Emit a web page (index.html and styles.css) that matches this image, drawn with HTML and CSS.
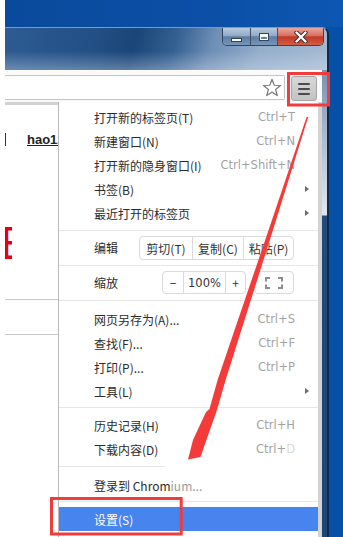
FILE: index.html
```html
<!DOCTYPE html>
<html>
<head>
<meta charset="utf-8">
<link rel="stylesheet" href="styles.css">
</head>
<body>
<div class="screen">
  <div class="strip"></div>
  <div class="main">
    <div class="desk-top"></div>
    <div class="row">
      <div class="window">
        <div class="titlebar">
          <div class="caps">
            <div class="cap min"><span class="min-ico"></span></div>
            <div class="cap max"><span class="max-ico"></span></div>
            <div class="cap close">
              <svg width="14" height="12" viewBox="0 0 14 12"><path d="M2.5 1.5 L11.5 10.5 M11.5 1.5 L2.5 10.5" stroke="#3a2a28" stroke-width="4.2" stroke-linecap="round"/><path d="M2.5 1.5 L11.5 10.5 M11.5 1.5 L2.5 10.5" stroke="#ffffff" stroke-width="2.4" stroke-linecap="round"/></svg>
            </div>
          </div>
        </div>
        <div class="win-body">
          <div class="client">
            <div class="toolbar">
              <div class="omnibox">
                <svg class="star" width="20" height="19" viewBox="0 0 20 19"><polygon points="10,1.3 12.23,7.23 18.56,7.52 13.61,11.47 15.29,17.58 10,14.1 4.71,17.58 6.39,11.47 1.44,7.52 7.77,7.23" fill="none" stroke="#7a7a7a" stroke-width="1.2" stroke-linejoin="round"/></svg>
              </div>
              <div class="menubtn"><span></span><span></span><span></span></div>
            </div>
            <div class="page">
              <div class="tabline"></div>
              <div class="links"><span class="vbar"></span><span class="hao">hao123</span></div>
              <div class="redclip"><span>E</span></div>
              <div class="hr hr1"></div>
              <div class="hr hr2"></div>

              <div class="menu">
                <div class="mi"><span>打开新的标签页(T)</span><span class="sc">Ctrl+T</span></div>
                <div class="mi"><span>新建窗口(N)</span><span class="sc">Ctrl+N</span></div>
                <div class="mi"><span>打开新的隐身窗口(I)</span><span class="sc">Ctrl+Shift+N</span></div>
                <div class="mi sub"><span>书签(B)</span><span class="arrow"></span></div>
                <div class="mi sub"><span>最近打开的标签页</span><span class="arrow"></span></div>
                <div class="sep s1"></div>
                <div class="mrow edit">
                  <span>编辑</span>
                  <div class="grp">
                    <span class="b w52">剪切(T)</span><span class="b w51">复制(C)</span><span class="b w50">粘贴(P)</span>
                  </div>
                </div>
                <div class="sep s2"></div>
                <div class="mrow zoom">
                  <span>缩放</span>
                  <div class="grp">
                    <span class="b w20">−</span><span class="b w42 num">100%</span><span class="b w20">+</span>
                  </div>
                  <div class="fs">
                    <svg width="18" height="12" viewBox="0 0 18 12"><path d="M1 4.5 V1 H5 M13 1 H17 V4.5 M17 7.5 V11 H13 M5 11 H1 V7.5" fill="none" stroke="#8c8c8c" stroke-width="2"/></svg>
                  </div>
                </div>
                <div class="sep s3"></div>
                <div class="mi"><span>网页另存为(A)...</span><span class="sc">Ctrl+S</span></div>
                <div class="mi"><span>查找(F)...</span><span class="sc">Ctrl+F</span></div>
                <div class="mi"><span>打印(P)...</span><span class="sc">Ctrl+P</span></div>
                <div class="mi sub"><span>工具(L)</span><span class="arrow"></span></div>
                <div class="sep s4"></div>
                <div class="mi"><span>历史记录(H)</span><span class="sc">Ctrl+H</span></div>
                <div class="mi"><span>下载内容(D)</span><span class="sc">Ctrl+<span class="faint">D</span></span></div>
                <div class="sep s5"></div>
                <div class="mi"><span>登录到 Chrom<span class="fade">ium...</span></span></div>
                <div class="sep s6"></div>
                <div class="mi active"><span>设置(S)</span></div>
              </div>
            </div>
          </div>
          <div class="frame"></div>
        </div>
      </div>
      <div class="desk-right"></div>
    </div>
  </div>

  <svg class="annot" width="343" height="537" viewBox="0 0 343 537">
    <rect x="288.5" y="73.5" width="40" height="31.5" fill="none" stroke="#f23b3b" stroke-width="3"/>
    <rect x="51.5" y="498.5" width="129.7" height="35.5" fill="none" stroke="#f23b3b" stroke-width="3"/>
    <polygon points="306.6,117 308.2,117 273,230 225.6,380 217,410 206.4,440 200.5,457 188,459.5 193,440 206,412 209.5,409 217.6,380 268.6,230" fill="#f53a3a"/>
  </svg>
</div>
</body>
</html>
```
FILE: styles.css
```css
* { box-sizing: border-box; }
html, body { margin: 0; padding: 0; }
body {
  width: 343px;
  height: 537px;
  overflow: hidden;
  background: #0750a7;
  font-family: "Noto Sans CJK SC", "Noto Sans", sans-serif;
}
.screen {
  position: relative;
  display: flex;
  width: 343px;
  height: 537px;
}
.strip { width: 5px; flex: none; background: #ffffff; }
.main { flex: 1; display: flex; flex-direction: column; min-width: 0; }
.desk-top {
  height: 27px;
  flex: none;
  background: linear-gradient(90deg, #0a4a9c 0%, #0b4fa6 60%, #0d57b2 100%);
}
.row { flex: 1; display: flex; min-height: 0; }
.window {
  width: 324px;
  flex: none;
  display: flex;
  flex-direction: column;
  border-top: 1px solid #7e98b8;
  border-right: 2px solid #0e2b4f;
  border-top-right-radius: 7px;
  overflow: hidden;
}
.titlebar {
  height: 42px;
  flex: none;
  display: flex;
  justify-content: flex-end;
  align-items: flex-start;
  padding-right: 3px;
  background:
    linear-gradient(180deg, rgba(255,255,255,0) 55%, rgba(220,230,240,0.35) 100%),
    linear-gradient(105deg, #2d5c93 0%, #224f84 28%, #1a4578 40%, #335f91 52%, #6f8fb6 64%, #93adcb 78%, #a5bad3 100%);
}
.caps {
  display: flex;
  height: 18px;
  width: 102px;
  border: 1px solid #34465e;
  border-top: none;
  border-radius: 0 0 5px 5px;
  overflow: hidden;
}
.cap { display: flex; align-items: center; justify-content: center; }
.cap.min, .cap.max {
  background: linear-gradient(180deg, #b8c9dc 0%, #93aac6 45%, #5d7ca3 52%, #7896b9 100%);
  border-right: 1px solid #3c4f68;
}
.cap.min { width: 28px; }
.cap.max { width: 27px; }
.cap.close {
  flex: 1;
  background: linear-gradient(180deg, #e9a79e 0%, #d6705f 45%, #c03a27 52%, #d45b44 100%);
}
.min-ico {
  width: 11px;
  height: 4px;
  margin-top: 7px;
  background: #fff;
  border: 1px solid #33445a;
}
.max-ico {
  width: 10px;
  height: 8px;
  background: transparent;
  border: 1px solid #33445a;
  box-shadow: inset 0 0 0 1px #fff, inset 0 2px 0 1px #fff;
}
.win-body { flex: 1; display: flex; min-height: 0; }
.client {
  width: 317px;
  flex: none;
  display: flex;
  flex-direction: column;
  background: #ffffff;
}
.frame {
  flex: 1;
  background: linear-gradient(180deg, #7891b0 0px, #a7b8cc 60px, #dfe5ec 140px, #dfe5ec 145px, #204b7e 146px, #1d4678 100%);
}
.toolbar {
  height: 32px;
  flex: none;
  display: flex;
  align-items: flex-start;
  gap: 6px;
  padding-right: 5px;
  background: #fafafa;
  border-top: 1px solid #ffffff;
}
.omnibox {
  margin-top: 4px;
  width: 280px;
  height: 25px;
  background: #ffffff;
  border: 1px solid #c4c4c4;
  border-left: none;
  border-radius: 0 2px 2px 0;
  display: flex;
  align-items: center;
  justify-content: flex-end;
  padding-right: 2px;
}
.menubtn {
  margin-top: 5px;
  width: 26px;
  height: 25px;
  border: 1px solid #a6a6a6;
  border-radius: 3px;
  background: linear-gradient(180deg, #d8d8d8, #c3c3c3);
  display: flex;
  flex-direction: column;
  align-items: center;
  justify-content: center;
  gap: 3px;
}
.menubtn span {
  width: 12px;
  height: 2px;
  background: #4b4b4b;
  border-radius: 1px;
}
.page {
  flex: 1;
  position: relative;
  overflow: hidden;
  background: #ffffff;
}
.tabline { height: 3px; background: #d2d2d2; }
.links {
  margin-top: 27px;
  height: 14px;
  display: flex;
  align-items: center;
  font: bold 13px "Liberation Sans", Arial, sans-serif;
}
.vbar { width: 1px; height: 13px; background: #333; }
.hao { margin-left: 21px; color: #222; text-decoration: underline; white-space: nowrap; }
.redclip {
  margin-top: 73px;
  width: 7px;
  height: 40px;
  overflow: hidden;
}
.redclip span {
  display: block;
  margin-left: -5px;
  font: 47px/47px "Liberation Sans", Arial, sans-serif;
  color: #e6000c;
}
.hr { height: 1px; background: #c8c8c8; }
.hr1 { margin-top: 40px; }
.hr2 { margin-top: 34px; }

.menu {
  position: absolute;
  left: 53px;
  top: 0;
  width: 264px;
  bottom: -20px;
  background: #ffffff;
  border-left: 1px solid #b8b8b8;
  border-right: 4px solid #d3d3d3;
  padding-top: 3px;
  display: flex;
  flex-direction: column;
  font-size: 12px;
  color: #2b2b2b;
}
.mi {
  height: 24px;
  flex: none;
  display: flex;
  align-items: center;
  padding-left: 35px;
  padding-right: 23px;
  white-space: nowrap;
}
.mi.sub { padding-right: 9px; }
.sc {
  margin-left: auto;
  font: 11.5px "DejaVu Sans", sans-serif;
  color: #a3a3a3;
}
.faint { color: #dadada; }
.fade { color: #9a9a9a; }
.arrow {
  margin-left: auto;
  width: 0;
  height: 0;
  border-left: 4px solid #6b6b6b;
  border-top: 3.5px solid transparent;
  border-bottom: 3.5px solid transparent;
}
.mi.active { background: #4884ee; color: #ffffff; }
.sep { height: 1px; flex: none; background: #e6e6e6; }
.s1 { margin: 5px 0 4px; }
.s2 { margin: 4px 0 3px; }
.s3 { margin: 3px 0 6px; }
.s4 { margin: 4px 0 5px; }
.s5 { margin: 5px 0 6px; width: 106px; }
.s6 { margin: 4px 0 5px; }
.mrow {
  flex: none;
  display: flex;
  align-items: flex-start;
  padding-left: 35px;
  padding-right: 24px;
}
.mrow > span:first-child { line-height: 24px; }
.mrow.edit { height: 26px; padding-top: 1px; }
.mrow.zoom { height: 28px; padding-top: 2px; }
.mrow.zoom > span:first-child { line-height: 23px; }
.grp {
  margin-left: auto;
  display: flex;
  height: 24px;
  border: 1px solid #dadada;
  border-radius: 4px;
  background: #fff;
}
.zoom .grp { height: 23px; }
.b {
  display: flex;
  align-items: center;
  justify-content: center;
  border-left: 1px solid #dadada;
  color: #333;
  white-space: nowrap;
}
.b:first-child { border-left: none; }
.w52 { width: 52px; }
.w51 { width: 51px; }
.w50 { width: 50px; }
.w20 { width: 20px; }
.w42 { width: 42px; }
.num { font: 11.5px "DejaVu Sans", sans-serif; }
.fs {
  margin-left: 8px;
  width: 40px;
  height: 23px;
  border: 1px solid #dadada;
  border-radius: 4px;
  display: flex;
  align-items: center;
  justify-content: center;
}
.desk-right { flex: 1; background: #0750a7; }
.annot {
  position: absolute;
  left: 0;
  top: 0;
  pointer-events: none;
}
```
